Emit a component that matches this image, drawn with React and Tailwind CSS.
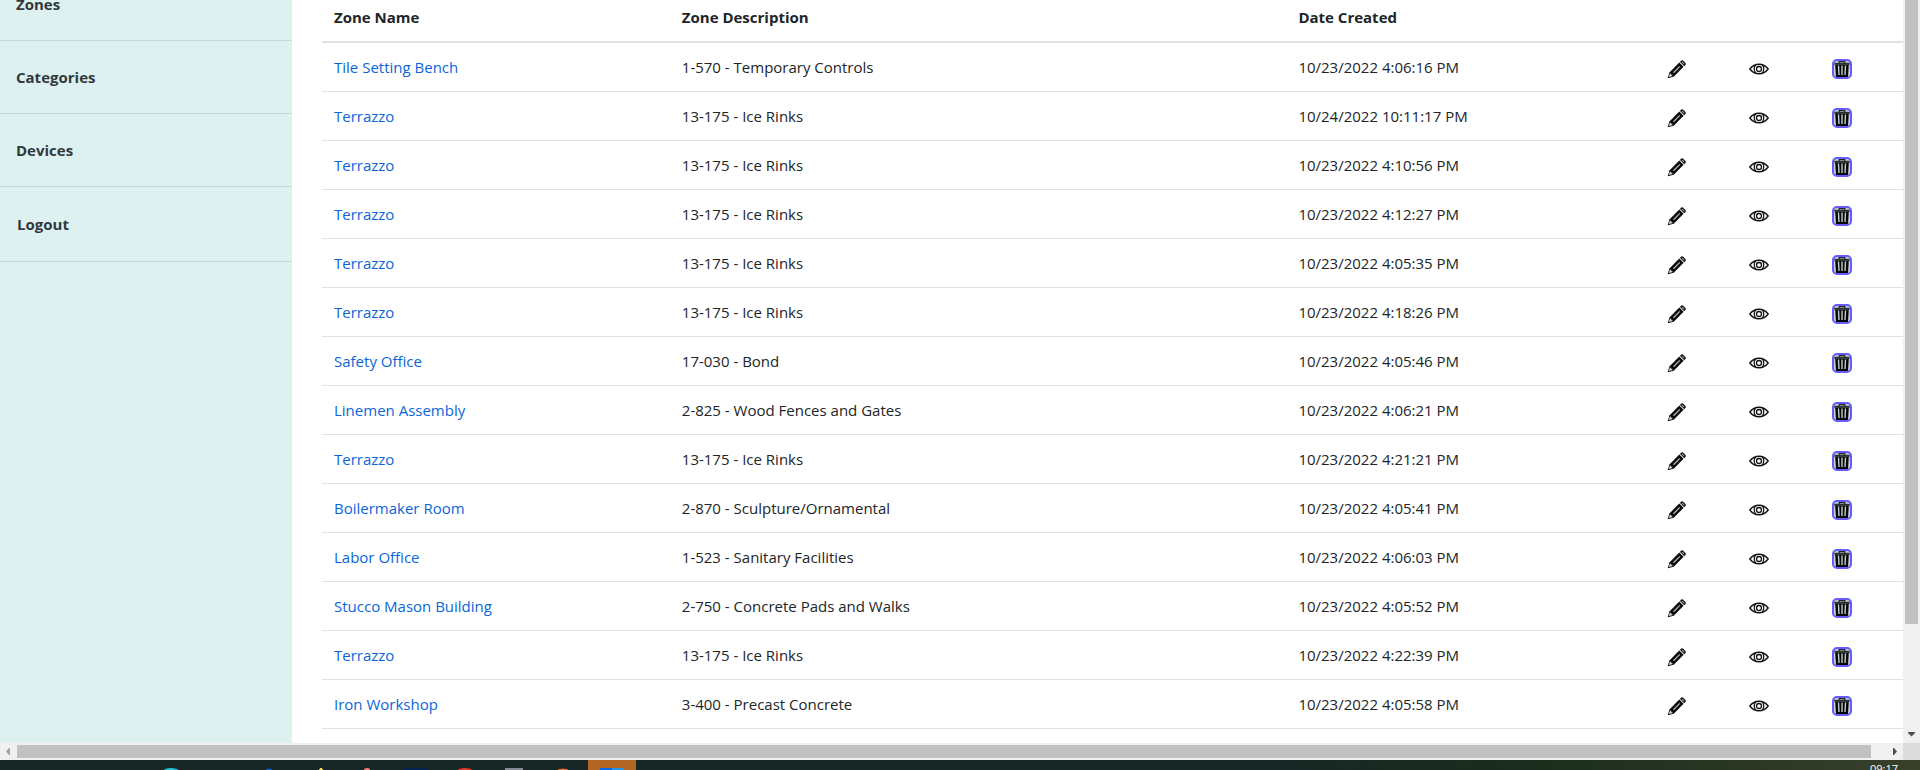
const zones = [
  ["Tile Setting Bench", "1-570 - Temporary Controls", "10/23/2022 4:06:16 PM"],
  ["Terrazzo", "13-175 - Ice Rinks", "10/24/2022 10:11:17 PM"],
  ["Terrazzo", "13-175 - Ice Rinks", "10/23/2022 4:10:56 PM"],
  ["Terrazzo", "13-175 - Ice Rinks", "10/23/2022 4:12:27 PM"],
  ["Terrazzo", "13-175 - Ice Rinks", "10/23/2022 4:05:35 PM"],
  ["Terrazzo", "13-175 - Ice Rinks", "10/23/2022 4:18:26 PM"],
  ["Safety Office", "17-030 - Bond", "10/23/2022 4:05:46 PM"],
  ["Linemen Assembly", "2-825 - Wood Fences and Gates", "10/23/2022 4:06:21 PM"],
  ["Terrazzo", "13-175 - Ice Rinks", "10/23/2022 4:21:21 PM"],
  ["Boilermaker Room", "2-870 - Sculpture/Ornamental", "10/23/2022 4:05:41 PM"],
  ["Labor Office", "1-523 - Sanitary Facilities", "10/23/2022 4:06:03 PM"],
  ["Stucco Mason Building", "2-750 - Concrete Pads and Walks", "10/23/2022 4:05:52 PM"],
  ["Terrazzo", "13-175 - Ice Rinks", "10/23/2022 4:22:39 PM"],
  ["Iron Workshop", "3-400 - Precast Concrete", "10/23/2022 4:05:58 PM"],
];

function PencilIcon() {
  return (
    <svg width="20" height="20" viewBox="0 0 20 20" aria-hidden="true">
      <path d="M2.400 13.400 12.300 3.500l4.300 4.300-9.900 9.900-6 1.500z" fill="#0a0a0a" />
      <path d="m3 14.300 2.900 2.800-3.500 1-.5-.5z" fill="#d0d0d0" />
      <path d="m6.500 13.700 6.300-6.300" stroke="#b5b5b5" strokeWidth="1.300" />
      <path d="m12.900 2.900 1.300-1.300q.9-.8 1.800 0l2.500 2.500q.8.900 0 1.800l-1.300 1.300z" fill="#1a1a1a" />
      <path d="m12.600 3.200 4.300 4.300" stroke="#bbb" strokeWidth=".8" />
      <path d="m15.200 3.200 1.700 1.700" stroke="#999" strokeWidth="1.200" />
    </svg>
  );
}

function EyeIcon() {
  return (
    <svg width="20" height="20" viewBox="0 0 20 20" fill="none" stroke="#111" aria-hidden="true">
      <path d="M.8 10C3.400 6.700 6.300 5.200 10 5.200s6.600 1.500 9.200 4.800c-2.600 3.300-5.500 4.800-9.200 4.800S3.400 13.300.8 10z" strokeWidth="1.400" />
      <path d="M6.700 5.900Q3.700 10 6.700 14.100M13.300 5.900q3 4.100 0 8.200" strokeWidth="1.200" />
      <circle cx="10" cy="10" r="2.500" strokeWidth="1.300" />
    </svg>
  );
}

function TrashIcon() {
  return (
    <svg width="16" height="16" viewBox="0 0 16 16" aria-hidden="true">
      <path d="M5.200 2V.6h5.600V2" fill="none" stroke="#222" strokeWidth="1.200" />
      <path d="M.3 1.800h15.400v2H.3z" fill="#2a2f30" />
      <path d="M1.200 3.800h13.600L14 16H2z" fill="#050505" />
      <path d="M4.500 4.500 5 14M8 4.500V14M11.500 4.500 11 14" stroke="#c4cfd2" strokeWidth="1.400" />
    </svg>
  );
}

function Sidebar() {
  const item = "block border-b border-[#c3d9d8] py-6 pl-4";
  return (
    <aside className="w-[292px] shrink-0 overflow-hidden bg-[#ddf2f0]">
      <nav className="-mt-8 font-bold text-[#32383e]">
        <a href="#zones" className={item}>Zones</a>
        <a href="#categories" className={item}>Categories</a>
        <a href="#devices" className={item}>Devices</a>
        <button type="button" className="block w-full border-b border-[#c3d9d8] py-[25px] pl-[17px] text-left">Logout</button>
      </nav>
    </aside>
  );
}

function ZoneTable() {
  return (
    <table className="-mt-[7px] w-full table-fixed border-separate border-spacing-0 text-left text-[#212529]">
      <colgroup>
        <col className="w-[22%]" />
        <col className="w-[39%]" />
        <col />
        <col className="w-[82px]" />
        <col className="w-[83px]" />
        <col className="w-[83px]" />
      </colgroup>
      <thead>
        <tr className="[&>*]:border-b-2 [&>*]:border-[#dee2e6] [&>*]:p-3">
          <th scope="col">Zone Name</th>
          <th scope="col">Zone Description</th>
          <th scope="col">Date Created</th>
          <td /><td /><td />
        </tr>
      </thead>
      <tbody>
        {zones.map(([name, description, created], i) => (
          <tr key={i} className="[&>td]:border-b [&>td]:border-[#dee2e6] [&>td]:px-3 [&>td]:py-3">
            <td><a href="#zone" className="text-[#0a66d8]">{name}</a></td>
            <td>{description}</td>
            <td>{created}</td>
            <td>
              <button type="button" aria-label="Edit zone" className="mt-1 block"><PencilIcon /></button>
            </td>
            <td>
              <button type="button" aria-label="View zone" className="mt-1 block"><EyeIcon /></button>
            </td>
            <td>
              <button type="button" aria-label="Delete zone" className="mt-1 block size-5 rounded-[5px] border-2 border-[#645cff] bg-[#c4cfd2]"><TrashIcon /></button>
            </td>
          </tr>
        ))}
      </tbody>
    </table>
  );
}

function Taskbar() {
  return (
    <footer className="flex h-[10px] shrink-0 items-start overflow-hidden bg-linear-to-r from-[#182625] from-65% via-[#1b2d1d] via-80% to-[#38402b]">
      <svg width="640" height="10" viewBox="0 0 640 10" className="shrink-0" aria-hidden="true">
        <path d="M588 0h48v10h-48z" fill="#b06524" />
        <ellipse cx="171" cy="11" rx="8" ry="3" fill="#28c0d8" />
        <ellipse cx="269" cy="10" rx="3" ry="1.500" fill="#0866c8" />
        <path d="M319 10V9h1V8h2v1h1v1z" fill="#f4e04a" />
        <ellipse cx="367" cy="10" rx="3" ry="2" fill="#f08080" />
        <path d="M404 8h24v2h-24z" fill="#032450" />
        <ellipse cx="465" cy="11" rx="8" ry="3" fill="#e83428" />
        <path d="M505 8h18v2h-18z" fill="#858b94" />
        <ellipse cx="563" cy="10" rx="5" ry="1.500" fill="#e86a35" />
        <path d="M600 8h12v2h-12z" fill="#0868e8" />
        <path d="M612 8h12v2h-12z" fill="#2494ea" />
      </svg>
      <time className="ml-auto pt-[3px] pr-[22px] text-[11px] leading-3 font-medium text-white">09:17</time>
    </footer>
  );
}

export default function App() {
  return (
    <div className="flex h-screen flex-col overflow-hidden bg-white font-['Open_Sans','Noto_Sans',sans-serif] text-[15px] leading-6">
      <div className="flex min-h-0 flex-1">
        <Sidebar />
        <main className="min-w-0 flex-1 overflow-hidden pl-[30px]">
          <ZoneTable />
        </main>
        <div className="flex w-[17px] shrink-0 flex-col items-center justify-between bg-[#f0f0f0]" aria-hidden="true">
          <div className="h-[84%] w-[13px] bg-[#c1c1c1]" />
          <svg width="17" height="17" viewBox="0 0 17 17"><path d="M5 6h7v1l-3.500 3.500L5 7z" fill="#505050" /></svg>
        </div>
      </div>
      <div className="flex h-[17px] shrink-0 items-center bg-[#f0f0f0]" aria-hidden="true">
        <svg width="17" height="17" viewBox="0 0 17 17" className="shrink-0"><path d="M10 5v7H9L6 8.500 9 5z" fill="#a3a3a3" /></svg>
        <div className="h-[13px] flex-1 bg-[#c1c1c1]" />
        <svg width="32" height="17" viewBox="0 0 32 17" className="shrink-0"><path d="M22 5v7h1l3-3.500L23 5z" fill="#505050" /></svg>
        <div className="h-full w-[17px] shrink-0 bg-[#dcdcdc]" />
      </div>
      <Taskbar />
    </div>
  );
}
